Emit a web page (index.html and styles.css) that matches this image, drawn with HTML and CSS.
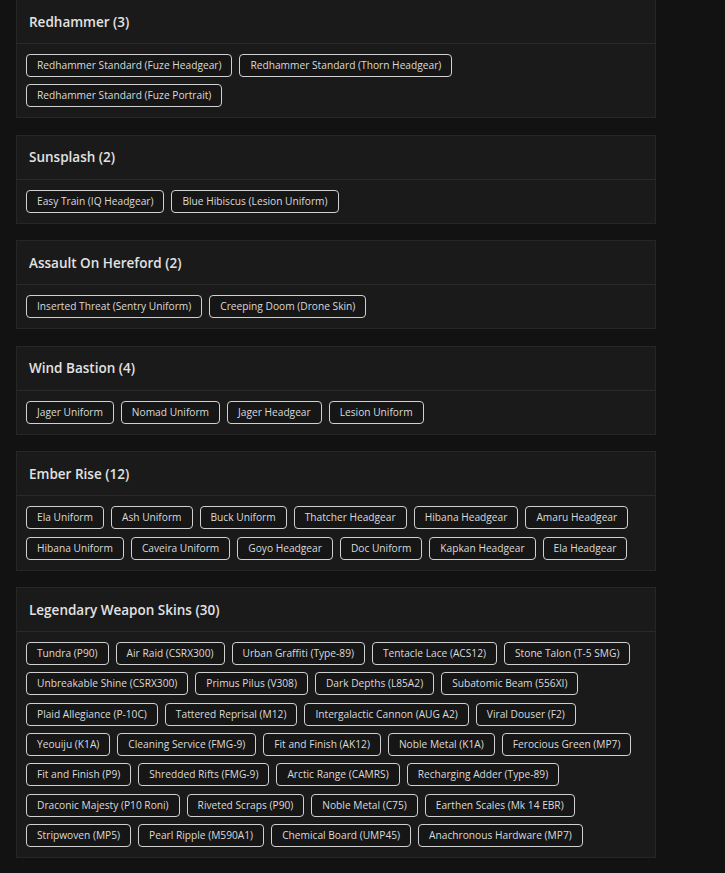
FILE: index.html
```html
<!DOCTYPE html>
<html lang="en">

<head>
    <meta charset="UTF-8">
    <meta name="viewport" content="width=device-width, initial-scale=1.0">
    <title>Event Skins</title>
    <link rel="stylesheet" href="styles.css">
</head>

<body>
    <div class="container">
        <div class="event-card">
            <div class="event-header">Redhammer (3)</div>
            <div class="event-items">
                <span class="item-tag">Redhammer Standard (Fuze Headgear)</span>
                <span class="item-tag">Redhammer Standard (Thorn Headgear)</span>
                <span class="item-tag">Redhammer Standard (Fuze Portrait)</span>
            </div>
        </div>

        <div class="event-card">
            <div class="event-header">Sunsplash (2)</div>
            <div class="event-items">
                <span class="item-tag">Easy Train (IQ Headgear)</span>
                <span class="item-tag">Blue Hibiscus (Lesion Uniform)</span>
            </div>
        </div>

        <div class="event-card">
            <div class="event-header">Assault On Hereford (2)</div>
            <div class="event-items">
                <span class="item-tag">Inserted Threat (Sentry Uniform)</span>
                <span class="item-tag">Creeping Doom (Drone Skin)</span>
            </div>
        </div>

        <div class="event-card">
            <div class="event-header">Wind Bastion (4)</div>
            <div class="event-items">
                <span class="item-tag">Jager Uniform</span>
                <span class="item-tag">Nomad Uniform</span>
                <span class="item-tag">Jager Headgear</span>
                <span class="item-tag">Lesion Uniform</span>
            </div>
        </div>

        <div class="event-card">
            <div class="event-header">Ember Rise (12)</div>
            <div class="event-items">
                <span class="item-tag">Ela Uniform</span>
                <span class="item-tag">Ash Uniform</span>
                <span class="item-tag">Buck Uniform</span>
                <span class="item-tag">Thatcher Headgear</span>
                <span class="item-tag">Hibana Headgear</span>
                <span class="item-tag">Amaru Headgear</span>
                <span class="item-tag">Hibana Uniform</span>
                <span class="item-tag">Caveira Uniform</span>
                <span class="item-tag">Goyo Headgear</span>
                <span class="item-tag">Doc Uniform</span>
                <span class="item-tag">Kapkan Headgear</span>
                <span class="item-tag">Ela Headgear</span>
            </div>
        </div>

        <div class="event-card">
            <div class="event-header">Legendary Weapon Skins (30)</div>
            <div class="event-items">
                <span class="item-tag">Tundra (P90)</span>
                <span class="item-tag">Air Raid (CSRX300)</span>
                <span class="item-tag">Urban Graffiti (Type-89)</span>
                <span class="item-tag">Tentacle Lace (ACS12)</span>
                <span class="item-tag">Stone Talon (T-5 SMG)</span>
                <span class="item-tag">Unbreakable Shine (CSRX300)</span>
                <span class="item-tag">Primus Pilus (V308)</span>
                <span class="item-tag">Dark Depths (L85A2)</span>
                <span class="item-tag">Subatomic Beam (556XI)</span>
                <span class="item-tag">Plaid Allegiance (P-10C)</span>
                <span class="item-tag">Tattered Reprisal (M12)</span>
                <span class="item-tag">Intergalactic Cannon (AUG A2)</span>
                <span class="item-tag">Viral Douser (F2)</span>
                <span class="item-tag">Yeouiju (K1A)</span>
                <span class="item-tag">Cleaning Service (FMG-9)</span>
                <span class="item-tag">Fit and Finish (AK12)</span>
                <span class="item-tag">Noble Metal (K1A)</span>
                <span class="item-tag">Ferocious Green (MP7)</span>
                <span class="item-tag">Fit and Finish (P9)</span>
                <span class="item-tag">Shredded Rifts (FMG-9)</span>
                <span class="item-tag">Arctic Range (CAMRS)</span>
                <span class="item-tag">Recharging Adder (Type-89)</span>
                <span class="item-tag">Draconic Majesty (P10 Roni)</span>
                <span class="item-tag">Riveted Scraps (P90)</span>
                <span class="item-tag">Noble Metal (C75)</span>
                <span class="item-tag">Earthen Scales (Mk 14 EBR)</span>
                <span class="item-tag">Stripwoven (MP5)</span>
                <span class="item-tag">Pearl Ripple (M590A1)</span>
                <span class="item-tag">Chemical Board (UMP45)</span>
                <span class="item-tag">Anachronous Hardware (MP7)</span>
            </div>
        </div>
    </div>
</body>

</html>
```

FILE: styles.css
```css
* {
    margin: 0;
    padding: 0;
    box-sizing: border-box;
}

body {
    font-family: 'Open Sans', 'DejaVu Sans', sans-serif;
    background: #121212;
    color: #e6e6e6;
    min-height: 100vh;
}

.container {
    width: 640px;
    margin: -1px 0 0 16px;
    display: flex;
    flex-direction: column;
    gap: 16.5px;
    padding-bottom: 16px;
}

.event-card {
    background: #1a1a1a;
    border: 1px solid #262626;
}

.event-header {
    height: 44px;
    display: flex;
    align-items: center;
    padding: 0 12px;
    font-size: 13.5px;
    font-weight: 600;
    color: #e2e2e2;
    border-bottom: 1px solid #2a2a2a;
}

.event-items {
    display: flex;
    flex-wrap: wrap;
    gap: 7.3px 7px;
    padding: 10px 9px;
}

.item-tag {
    display: inline-block;
    height: 23px;
    line-height: 21px;
    padding: 0 10px;
    font-size: 10.2px;
    color: #dadada;
    background: #161616;
    border: 1px solid #d0d0d0;
    border-radius: 4px;
    white-space: nowrap;
}
```
